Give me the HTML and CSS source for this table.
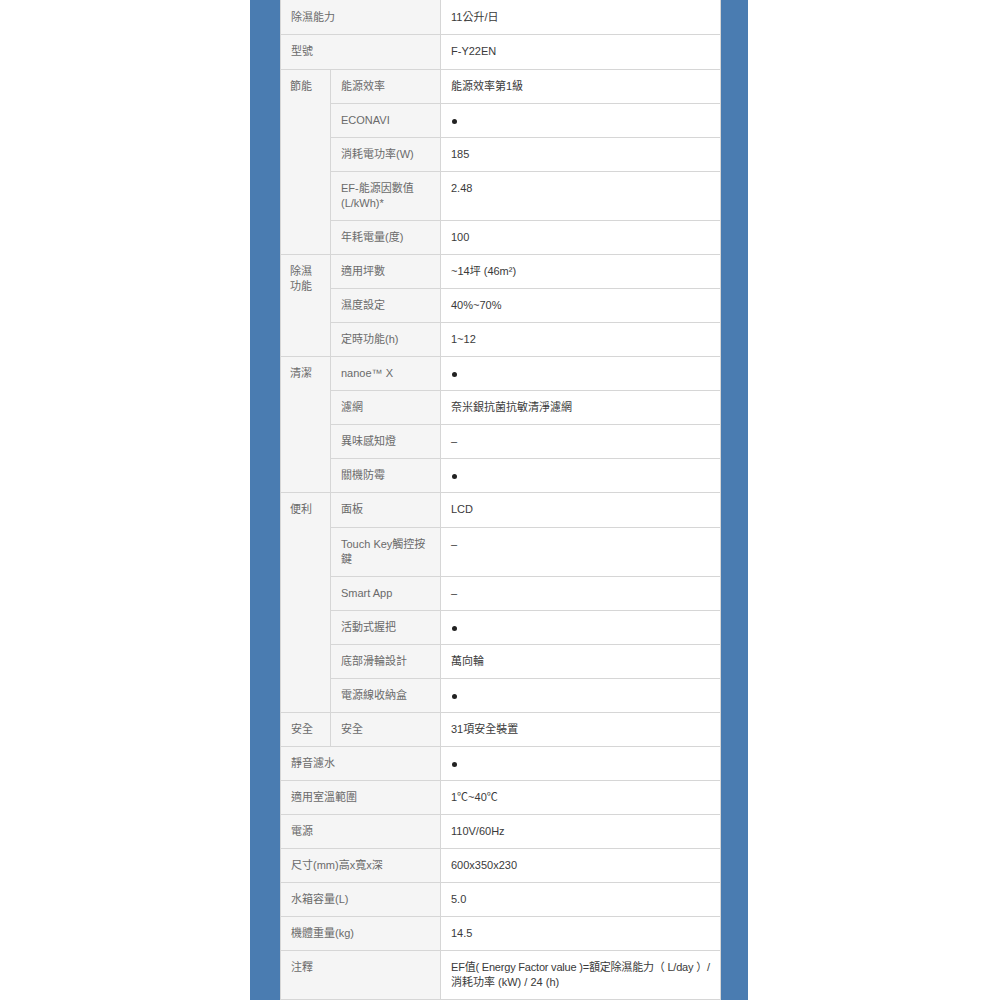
FILE: index.html
```html
<!DOCTYPE html>
<html lang="zh-Hant">
<head>
<meta charset="utf-8">
<link rel="stylesheet" href="styles.css">
</head>
<body>
<div class="frame">
<table class="spec">
<colgroup><col class="c1"><col class="c2"><col class="c3"></colgroup>
<tr><th colspan="2">除濕能力</th><td>11公升/日</td></tr>
<tr class="tall"><th colspan="2">型號</th><td>F-Y22EN</td></tr>
<tr><th rowspan="5">節能</th><th>能源效率</th><td>能源效率第1級</td></tr>
<tr><th>ECONAVI</th><td><span class="dot"></span></td></tr>
<tr><th>消耗電功率(W)</th><td>185</td></tr>
<tr><th>EF-能源因數值<br>(L/kWh)*</th><td>2.48</td></tr>
<tr><th>年耗電量(度)</th><td>100</td></tr>
<tr><th rowspan="3">除濕<br>功能</th><th>適用坪數</th><td>~14坪 (46m²)</td></tr>
<tr><th>濕度設定</th><td>40%~70%</td></tr>
<tr><th>定時功能(h)</th><td>1~12</td></tr>
<tr><th rowspan="4">清潔</th><th>nanoe™ X</th><td><span class="dot"></span></td></tr>
<tr><th>濾網</th><td>奈米銀抗菌抗敏清淨濾網</td></tr>
<tr><th>異味感知燈</th><td>–</td></tr>
<tr><th>關機防霉</th><td><span class="dot"></span></td></tr>
<tr class="tall"><th rowspan="6">便利</th><th>面板</th><td>LCD</td></tr>
<tr><th>Touch Key觸控按<br>鍵</th><td>–</td></tr>
<tr><th>Smart App</th><td>–</td></tr>
<tr><th>活動式握把</th><td><span class="dot"></span></td></tr>
<tr><th>底部滑輪設計</th><td>萬向輪</td></tr>
<tr><th>電源線收納盒</th><td><span class="dot"></span></td></tr>
<tr><th>安全</th><th>安全</th><td>31項安全裝置</td></tr>
<tr><th colspan="2">靜音濾水</th><td><span class="dot"></span></td></tr>
<tr><th colspan="2">適用室溫範圍</th><td>1℃~40℃</td></tr>
<tr><th colspan="2">電源</th><td>110V/60Hz</td></tr>
<tr><th colspan="2">尺寸(mm)高x寬x深</th><td>600x350x230</td></tr>
<tr><th colspan="2">水箱容量(L)</th><td>5.0</td></tr>
<tr><th colspan="2">機體重量(kg)</th><td>14.5</td></tr>
<tr><th colspan="2">注釋</th><td><span class="line">EF值( Energy Factor value )=額定除濕能力（ L/day ）/</span><br>消耗功率 (kW) / 24 (h)</td></tr>
</table>
</div>
</body>
</html>
```
FILE: styles.css
```css
html, body {
  margin: 0;
  padding: 0;
  background: #ffffff;
}
.frame {
  width: 440px;
  min-height: 1000px;
  margin-left: 250px;
  padding: 0 28px 0 30px;
  background: #4a7cb1;
}
.spec {
  width: 440px;
  table-layout: fixed;
  border-collapse: collapse;
  font-family: "Liberation Sans", "Noto Sans CJK TC", sans-serif;
  font-size: 11px;
  line-height: 15px;
  color: #444;
}
.c1 { width: 50px; }
.c2 { width: 110px; }
.c3 { width: 280px; }
.spec th, .spec td {
  border: 1px solid #d6d6d6;
  padding: 9px 9px 9px 10px;
  text-align: left;
  vertical-align: top;
  font-weight: normal;
}
.spec tr:first-child th, .spec tr:first-child td {
  border-top: none;
  padding-top: 10px;
}
.spec tr.tall th, .spec tr.tall td {
  padding-bottom: 10px;
}
.spec th {
  background: #f5f5f5;
  color: #6a6a6a;
}
.spec th[rowspan] {
  padding-left: 9px;
}
.spec td {
  background: #ffffff;
  color: #3a3a3a;
}
.dot {
  display: inline-block;
  width: 5px;
  height: 5px;
  border-radius: 50%;
  background: #222;
  vertical-align: 0;
  margin-left: 1px;
}
.line {
  white-space: nowrap;
  letter-spacing: -0.2px;
}
```
